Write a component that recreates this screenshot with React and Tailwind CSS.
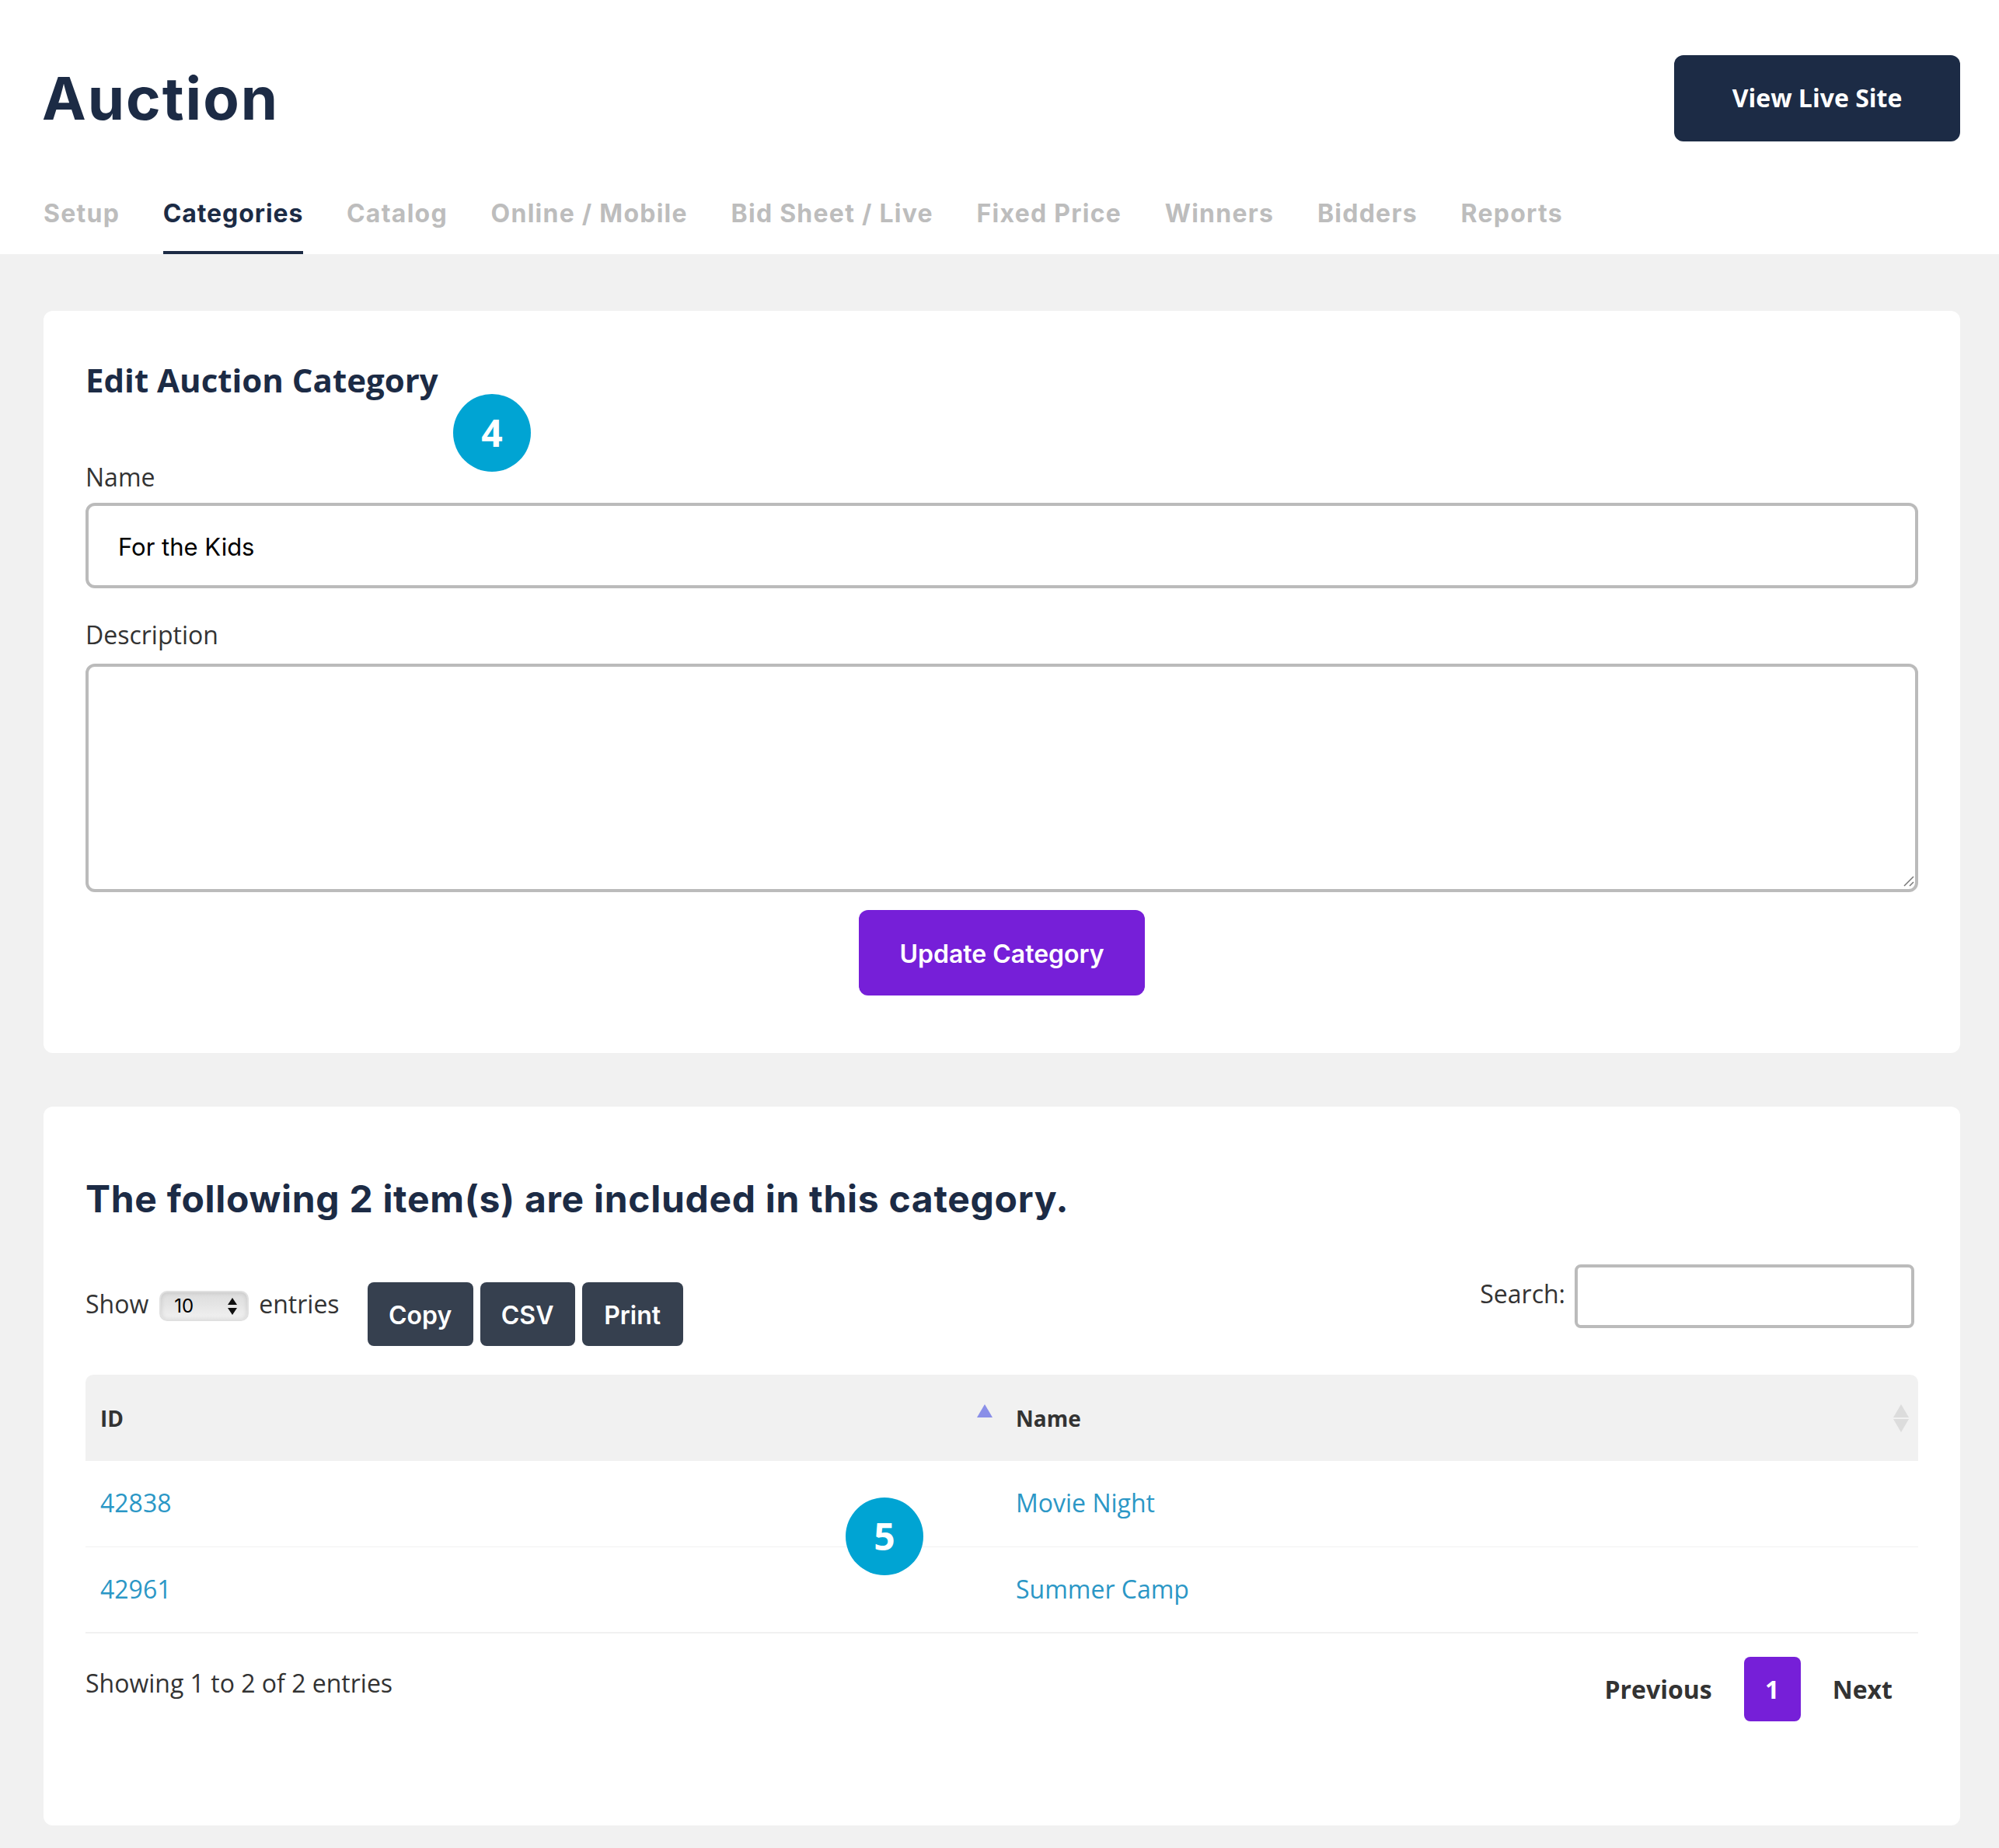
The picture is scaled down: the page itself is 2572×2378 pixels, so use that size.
const heading = "font-['Inter',sans-serif]";

const tabs = ['Setup', 'Categories', 'Catalog', 'Online / Mobile', 'Bid Sheet / Live', 'Fixed Price', 'Winners', 'Bidders', 'Reports'];

function Badge({ n, className }) {
  return (
    <div className={`absolute flex h-[100px] w-[100px] items-center justify-center rounded-full bg-[#00a4d3] text-[48px] font-bold text-white ${className}`}>
      {n}
    </div>
  );
}

function SortIcon({ up, down }) {
  return (
    <svg width="20" height="36" viewBox="0 0 20 36" className="shrink-0">
      <path d="M10 0 L20 17 L0 17 Z" fill={up} />
      <path d="M10 36 L20 19 L0 19 Z" fill={down} />
    </svg>
  );
}

export default function App() {
  return (
    <div className="min-h-[2378px] bg-[#f1f1f1] font-['Open_Sans',sans-serif] text-[#333333]">
      <header className="bg-white pr-[50px] pl-[56px]">
        <div className="flex items-start justify-between pt-[71px]">
          <h1 className={`${heading} -ml-[2px] text-[76px] leading-[111px] font-bold tracking-[2px] text-[#1c2b45]`}>Auction</h1>
          <a className="flex h-[111px] w-[368px] items-center justify-center rounded-[12px] bg-[#1c2b45] pb-[2px] text-[32px] font-bold text-white">
            View Live Site
          </a>
        </div>
        <nav className="mt-[45px] flex gap-[55.7px]">
          {tabs.map((t) => (
            <a
              key={t}
              className={`${heading} h-[100px] border-b-4 pt-[24px] text-[32px] leading-[48px] font-bold whitespace-nowrap ${
                t === 'Categories' ? 'border-[#1c2b45] tracking-[0.9px] text-[#1c2b45]' : 'border-transparent tracking-[1.25px] text-[#bdbdbd]'
              }`}
            >
              {t}
            </a>
          ))}
        </nav>
      </header>

      <main className="flex flex-col gap-[69px] pt-[73px] pr-[50px] pl-[56px]">
        <section className="relative h-[955px] rounded-[12px] bg-white px-[54px] pt-[59px]">
          <h2 className="text-[42px] leading-[60px] font-bold text-[#1c2b45]">Edit Auction Category</h2>
          <Badge n="4" className="top-[107px] left-[527px]" />
          <label className="mt-[66px] mb-[4px] block text-[32px] leading-[58px]">Name</label>
          <input
            defaultValue="For the Kids"
            className="block h-[110px] w-full rounded-[12px] border-4 border-[#bbbbbb] bg-white px-[38px] pt-[2px] font-['Inter',sans-serif] text-[31px] text-black outline-none"
          />
          <label className="mt-[27px] mb-[4px] block text-[32px] leading-[66px]">Description</label>
          <div className="relative mb-[23px] h-[294px]">
            <textarea className="block h-full w-full resize-none rounded-[12px] border-4 border-[#bbbbbb] bg-white outline-none" />
            <svg width="14" height="14" viewBox="0 0 14 14" className="absolute right-[5px] bottom-[7px]">
              <path d="M1 13 L13 1 M8 13 L13 8" stroke="#777777" strokeWidth="1.5" />
            </svg>
          </div>
          <div className="flex justify-center">
            <button className={`${heading} h-[110px] w-[368px] rounded-[12px] bg-[#761fd8] pt-[4px] text-[32px] font-semibold text-white`}>
              Update Category
            </button>
          </div>
        </section>

        <section className="relative h-[925px] rounded-[12px] bg-white px-[54px] pt-[84px]">
          <h2 className={`${heading} text-[48px] leading-[70px] font-bold tracking-[0.7px] text-[#1c2b45]`}>The following 2 item(s) are included in this category.</h2>
          <Badge n="5" className="top-[503px] left-[1032px]" />

          <div className="mt-[49px] flex h-[142px] items-start justify-between">
            <div className="flex items-start">
              <div className="flex items-start pt-[27px] text-[32px] leading-[48px]">
                <span>Show</span>
                <div className="mt-[7px] mr-[13px] ml-[14px] flex h-[39px] w-[115px] items-center justify-between rounded-[10px] border-2 border-[#e0e0e0] bg-gradient-to-b from-[#dcdcdc] via-[#e6e6e6] to-[#f2f2f2] pr-[12px] pl-[17px] font-['Inter',sans-serif] text-[24px] text-black shadow-[inset_0_0_6px_rgba(0,0,0,0.12)]">
                  10
                  <svg width="14" height="24" viewBox="0 0 14 24">
                    <path d="M7 1 L13 10 L1 10 Z" fill="#111111" />
                    <path d="M7 23 L13 14 L1 14 Z" fill="#111111" />
                  </svg>
                </div>
                <span>entries</span>
              </div>
              <div className="mt-[23px] ml-[36px] flex gap-[9px]">
                <button className={`${heading} h-[82px] w-[136px] rounded-[8px] bg-[#36404f] pt-[4px] text-[32px] font-semibold text-white`}>Copy</button>
                <button className={`${heading} h-[82px] w-[122px] rounded-[8px] bg-[#36404f] pt-[4px] text-[32px] font-semibold text-white`}>CSV</button>
                <button className={`${heading} h-[82px] w-[130px] rounded-[8px] bg-[#36404f] pt-[4px] text-[32px] font-semibold text-white`}>Print</button>
              </div>
            </div>
            <div className="flex items-center gap-[12px] pr-[5px]">
              <span className="pb-[6px] text-[32px]">Search:</span>
              <input className="h-[82px] w-[437px] rounded-[8px] border-4 border-[#bbbbbb] bg-white outline-none" />
            </div>
          </div>

          <div className="flex h-[111px] items-center rounded-t-[10px] bg-[#f1f1f1] text-[28px] font-bold">
            <div className="flex w-[1177px] items-center justify-between pr-[10px] pl-[19px]">
              <span>ID</span>
              <SortIcon up="#8a8fe8" down="#f1f1f1" />
            </div>
            <div className="flex flex-1 items-center justify-between pr-[12px] pl-[20px]">
              <span>Name</span>
              <SortIcon up="#dcdcdc" down="#dcdcdc" />
            </div>
          </div>
          {[
            ['42838', 'Movie Night'],
            ['42961', 'Summer Camp'],
          ].map(([id, name], i) => (
            <div key={id} className={`flex h-[111px] items-center border-[#f1f1f1] pb-[2px] text-[32px] text-[#2b97c6] ${i === 0 ? 'border-b' : 'border-b-2'}`}>
              <a className="w-[1177px] pl-[19px]">{id}</a>
              <a className="pl-[20px]">{name}</a>
            </div>
          ))}

          <div className="mt-[30px] flex items-start justify-between pr-[33px]">
            <span className="mt-[10px] text-[32px]">Showing 1 to 2 of 2 entries</span>
            <div className="flex items-center text-[32px] font-bold">
              <a>Previous</a>
              <a className="mx-[41px] flex h-[83px] w-[73px] items-center justify-center rounded-[8px] bg-[#761fd8] text-white">1</a>
              <a>Next</a>
            </div>
          </div>
        </section>
      </main>
    </div>
  );
}
